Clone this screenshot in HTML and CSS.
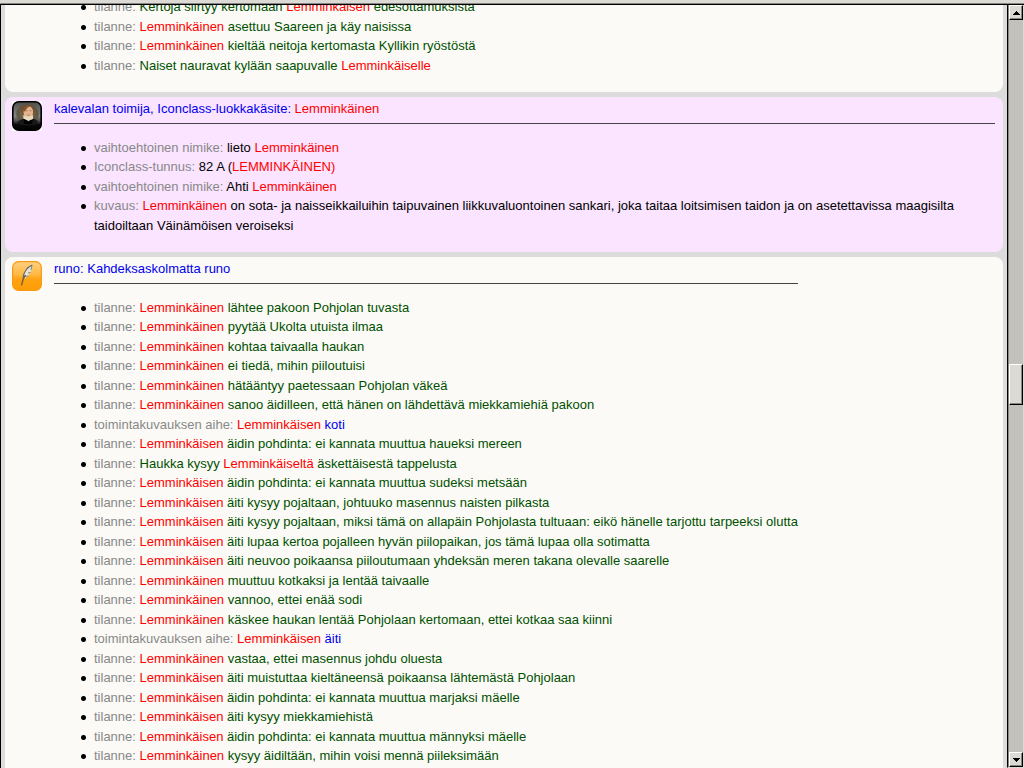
FILE: index.html
```html
<!DOCTYPE html>
<html lang="fi">
<head>
    <meta charset="UTF-8">
    <meta name="viewport" content="width=device-width, initial-scale=1.0">
    <title>Lemminkäinen</title>
    <link rel="stylesheet" href="styles.css">
</head>
<body>
    <div class="topbar"></div>
    <div class="window">
        <main class="results">
            <section class="card scrolled">
                <div class="card-body no-icon">
                    <ul>
                        <li><span class="prop">tilanne:</span> <a class="scene" href="#">Kertoja siirtyy kertomaan <em>Lemminkäisen</em> edesottamuksista</a></li>
                        <li><span class="prop">tilanne:</span> <a class="scene" href="#"><em>Lemminkäinen</em> asettuu Saareen ja käy naisissa</a></li>
                        <li><span class="prop">tilanne:</span> <a class="scene" href="#"><em>Lemminkäinen</em> kieltää neitoja kertomasta Kyllikin ryöstöstä</a></li>
                        <li><span class="prop">tilanne:</span> <a class="scene" href="#">Naiset nauravat kylään saapuvalle <em>Lemminkäiselle</em></a></li>
                    </ul>
                </div>
            </section>

            <section class="card person">
                <svg class="icon" viewBox="0 0 30 30" aria-hidden="true">
                    <defs>
                        <linearGradient id="dark" x1="0" y1="0" x2="0" y2="1">
                            <stop offset="0" stop-color="#4c4c4a"/>
                            <stop offset="0.5" stop-color="#8a8a88"/>
                            <stop offset="0.68" stop-color="#4a4a4a"/>
                            <stop offset="0.8" stop-color="#0a0a0a"/>
                            <stop offset="1" stop-color="#000"/>
                        </linearGradient>
                        <radialGradient id="glow">
                            <stop offset="0" stop-color="#8b7a5a"/>
                            <stop offset="0.8" stop-color="#5c5440"/>
                            <stop offset="1" stop-color="#5c5440" stop-opacity="0"/>
                        </radialGradient>
                    </defs>
                    <rect width="30" height="30" fill="#fff"/>
                    <rect x="0.8" y="0.8" width="28.4" height="28.4" rx="6" fill="url(#dark)" stroke="#000" stroke-width="1.6"/>
                    <ellipse cx="15.5" cy="13" rx="12.5" ry="11" fill="url(#glow)"/>
                    <path d="M5 21 Q9 18 12 17.5 L20 17.5 Q25 18 26 21 L22 24 L9 24 Z" fill="#181818"/>
                    <path d="M10 12 Q8.5 4.5 15 4 Q23 3.5 22 12 L20.5 16 L12 16 Z" fill="#7a4a28"/>
                    <ellipse cx="16.3" cy="11.2" rx="4.8" ry="6.2" fill="#e2b58e"/>
                    <path d="M11.3 10 Q12 4.5 18.5 5.2 Q14.5 6.5 13 10.5 Z" fill="#84532d"/>
                    <path d="M11.3 14 Q16 17 21 14 L21 18 L16.5 20 L11.3 17.5 Z" fill="#e6d9bd"/>
                    <path d="M13.7 9.8 h1.8 M17.6 9.8 h1.8 M15.5 14 h2.2" stroke="#a0694a" stroke-width="0.8"/>
                    <path d="M11.5 18 L14.5 19.5 L16.2 21.5 L18 19.5 L21 18.5 L20 23 L12 23 Z" fill="#000"/>
                </svg>
                <div class="card-body">
                    <h2><a href="#">kalevalan toimija, Iconclass-luokkakäsite: <em>Lemminkäinen</em></a></h2>
                    <ul>
                        <li><span class="prop">vaihtoehtoinen nimike:</span> lieto <em>Lemminkäinen</em></li>
                        <li><span class="prop">Iconclass-tunnus:</span> 82 A (<em>LEMMINKÄINEN)</em></li>
                        <li><span class="prop">vaihtoehtoinen nimike:</span> Ahti <em>Lemminkäinen</em></li>
                        <li><span class="prop">kuvaus:</span> <em>Lemminkäinen</em> on sota- ja naisseikkailuihin taipuvainen liikkuvaluontoinen sankari, joka taitaa loitsimisen taidon ja on asetettavissa maagisilta taidoiltaan Väinämöisen veroiseksi</li>
                    </ul>
                </div>
            </section>

            <section class="card">
                <svg class="icon" viewBox="0 0 30 30" aria-hidden="true">
                    <defs>
                        <linearGradient id="amber" x1="0" y1="0" x2="0" y2="1">
                            <stop offset="0" stop-color="#ffd083"/>
                            <stop offset="0.45" stop-color="#ffb844"/>
                            <stop offset="0.6" stop-color="#ffa312"/>
                            <stop offset="1" stop-color="#ff9d05"/>
                        </linearGradient>
                    </defs>
                    <rect x="0.6" y="0.6" width="28.8" height="28.8" rx="6" fill="url(#amber)" stroke="#f99b12" stroke-width="1.2"/>
                    <path d="M20.3 4 Q20.5 8 18.3 11.5 Q16.5 15.5 12.3 18 L11 17.5 Q11.3 12.5 14 9 Q16.5 5.5 20.3 4 Z" fill="#e4e4dc"/>
                    <path d="M20.3 4 Q16.5 5.5 14 9 Q11.3 12.5 11 17.5" fill="none" stroke="#666860" stroke-width="1.2"/>
                    <path d="M20 4.5 L19 9 M18.5 11.5 L16 12 M16.5 15 L13.5 15.5" stroke="#7b7b70" stroke-width="0.9"/>
                    <path d="M13.5 14 Q10.5 18 9.5 24.5" fill="none" stroke="#6b6043" stroke-width="1.4"/>
                </svg>
                <div class="card-body">
                    <h2><a href="#">runo: Kahdeksaskolmatta runo</a></h2>
                    <ul>
                        <li><span class="prop">tilanne:</span> <a class="scene" href="#"><em>Lemminkäinen</em> lähtee pakoon Pohjolan tuvasta</a></li>
                        <li><span class="prop">tilanne:</span> <a class="scene" href="#"><em>Lemminkäinen</em> pyytää Ukolta utuista ilmaa</a></li>
                        <li><span class="prop">tilanne:</span> <a class="scene" href="#"><em>Lemminkäinen</em> kohtaa taivaalla haukan</a></li>
                        <li><span class="prop">tilanne:</span> <a class="scene" href="#"><em>Lemminkäinen</em> ei tiedä, mihin piiloutuisi</a></li>
                        <li><span class="prop">tilanne:</span> <a class="scene" href="#"><em>Lemminkäinen</em> hätääntyy paetessaan Pohjolan väkeä</a></li>
                        <li><span class="prop">tilanne:</span> <a class="scene" href="#"><em>Lemminkäinen</em> sanoo äidilleen, että hänen on lähdettävä miekkamiehiä pakoon</a></li>
                        <li><span class="prop">toimintakuvauksen aihe:</span> <a href="#"><em>Lemminkäisen</em> koti</a></li>
                        <li><span class="prop">tilanne:</span> <a class="scene" href="#"><em>Lemminkäisen</em> äidin pohdinta: ei kannata muuttua haueksi mereen</a></li>
                        <li><span class="prop">tilanne:</span> <a class="scene" href="#">Haukka kysyy <em>Lemminkäiseltä</em> äskettäisestä tappelusta</a></li>
                        <li><span class="prop">tilanne:</span> <a class="scene" href="#"><em>Lemminkäisen</em> äidin pohdinta: ei kannata muuttua sudeksi metsään</a></li>
                        <li><span class="prop">tilanne:</span> <a class="scene" href="#"><em>Lemminkäisen</em> äiti kysyy pojaltaan, johtuuko masennus naisten pilkasta</a></li>
                        <li><span class="prop">tilanne:</span> <a class="scene" href="#"><em>Lemminkäisen</em> äiti kysyy pojaltaan, miksi tämä on allapäin Pohjolasta tultuaan: eikö hänelle tarjottu tarpeeksi olutta</a></li>
                        <li><span class="prop">tilanne:</span> <a class="scene" href="#"><em>Lemminkäisen</em> äiti lupaa kertoa pojalleen hyvän piilopaikan, jos tämä lupaa olla sotimatta</a></li>
                        <li><span class="prop">tilanne:</span> <a class="scene" href="#"><em>Lemminkäisen</em> äiti neuvoo poikaansa piiloutumaan yhdeksän meren takana olevalle saarelle</a></li>
                        <li><span class="prop">tilanne:</span> <a class="scene" href="#"><em>Lemminkäinen</em> muuttuu kotkaksi ja lentää taivaalle</a></li>
                        <li><span class="prop">tilanne:</span> <a class="scene" href="#"><em>Lemminkäinen</em> vannoo, ettei enää sodi</a></li>
                        <li><span class="prop">tilanne:</span> <a class="scene" href="#"><em>Lemminkäinen</em> käskee haukan lentää Pohjolaan kertomaan, ettei kotkaa saa kiinni</a></li>
                        <li><span class="prop">toimintakuvauksen aihe:</span> <a href="#"><em>Lemminkäisen</em> äiti</a></li>
                        <li><span class="prop">tilanne:</span> <a class="scene" href="#"><em>Lemminkäinen</em> vastaa, ettei masennus johdu oluesta</a></li>
                        <li><span class="prop">tilanne:</span> <a class="scene" href="#"><em>Lemminkäisen</em> äiti muistuttaa kieltäneensä poikaansa lähtemästä Pohjolaan</a></li>
                        <li><span class="prop">tilanne:</span> <a class="scene" href="#"><em>Lemminkäisen</em> äidin pohdinta: ei kannata muuttua marjaksi mäelle</a></li>
                        <li><span class="prop">tilanne:</span> <a class="scene" href="#"><em>Lemminkäisen</em> äiti kysyy miekkamiehistä</a></li>
                        <li><span class="prop">tilanne:</span> <a class="scene" href="#"><em>Lemminkäisen</em> äidin pohdinta: ei kannata muuttua männyksi mäelle</a></li>
                        <li><span class="prop">tilanne:</span> <a class="scene" href="#"><em>Lemminkäinen</em> kysyy äidiltään, mihin voisi mennä piileksimään</a></li>
                    </ul>
                </div>
            </section>
        </main>

        <div class="scrollbar">
            <button type="button" class="arrow" aria-label="Ylös">
                <svg viewBox="0 0 7 4" aria-hidden="true" shape-rendering="crispEdges"><path d="M3 0h1v1h1v1h1v1h1v1H0V3h1V2h1V1h1z"/></svg>
            </button>
            <div class="track">
                <div class="space-above"></div>
                <div class="thumb"></div>
                <div class="space-below"></div>
            </div>
            <button type="button" class="arrow" aria-label="Alas">
                <svg viewBox="0 0 7 4" aria-hidden="true" shape-rendering="crispEdges"><path d="M0 0h7v1H6v1H5v1H4v1H3V3H2V2H1V1H0z"/></svg>
            </button>
        </div>
    </div>
</body>
</html>
```
FILE: styles.css
```css
* {
    box-sizing: border-box;
}

body {
    margin: 0;
    height: 100vh;
    overflow: hidden;
    display: flex;
    flex-direction: column;
    background: #dcdcdc;
    color: #000;
    font-family: "Liberation Sans", Arial, sans-serif;
    font-size: 13px;
    line-height: 1.5;
}

.topbar {
    flex: none;
    height: 5px;
    background: #dcdad5;
    border-bottom: 1px solid #000;
    box-shadow: inset 0 -1px #888680;
}

.window {
    flex: 1;
    min-height: 0;
    display: flex;
    border-left: 1px solid #000;
}

/* result list */
.results {
    flex: 1;
    min-width: 0;
    overflow: hidden;
    padding: 0 4px;
}

.card {
    display: flex;
    gap: 12px;
    margin-bottom: 5px;
    padding: 2px 8px 4px 7px;
    background: #fbfaf6;
    border-radius: 8px;
}

.scrolled {
    margin-top: -24px;
}

.person {
    background: #fae4ff;
}

.icon {
    flex: none;
    width: 30px;
    height: 30px;
    margin-top: 2px;
}

.card-body {
    min-width: 0;
}

.no-icon {
    padding-left: 42px;
}

h2 {
    margin: 0;
    padding-bottom: 4px;
    border-bottom: 1px solid #444;
    font-size: 13px;
    font-weight: normal;
}

ul {
    margin: 14px 0 13px;
    padding-left: 26px;
    list-style: none;
}

/* round bullet, drawn in the padding of the item */
li {
    padding-left: 14px;
    background: radial-gradient(circle, #000 2px, transparent 3px) 0 7px / 7px 7px no-repeat;
}

a {
    color: #00e;
    text-decoration: none;
}

.scene {
    color: #005000;
}

em {
    color: #f00;
    font-style: normal;
}

.prop {
    color: #888;
}

/* scrollbar */
.scrollbar {
    flex: none;
    width: 17px;
    display: flex;
    flex-direction: column;
    background: #c3c1bb;
    border: solid #dcdad5;
    border-width: 0 1px 1px;
    border-left-color: #000;
    box-shadow: inset 1px 0 #888680;
    padding-left: 1px;
}

.arrow,
.thumb {
    background: #dcdad5;
    border: 1px solid;
    border-color: #fff #000 #000 #fff;
    box-shadow: inset -1px -1px #888680;
}

.arrow {
    flex: none;
    height: 15px;
    padding: 0;
    display: flex;
    align-items: center;
    justify-content: center;
}

.arrow svg {
    width: 7px;
    height: 4px;
}

.track {
    flex: 1;
    display: flex;
    flex-direction: column;
}

.thumb {
    flex: none;
    height: 41px;
}

.space-above {
    flex: 344;
}

.space-below {
    flex: 347;
}
```
